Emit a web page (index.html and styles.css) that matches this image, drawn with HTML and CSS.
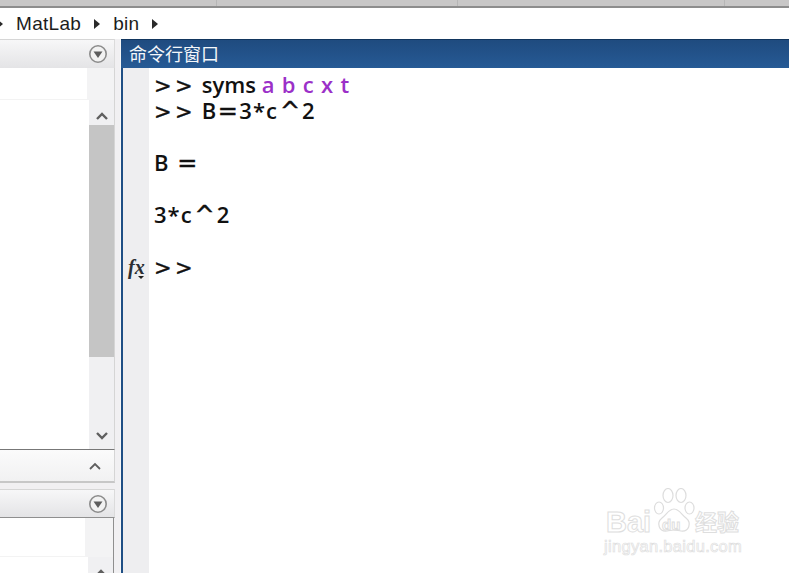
FILE: index.html
```html
<!DOCTYPE html>
<html lang="zh">
<head>
<meta charset="utf-8">
<title>MatLab</title>
<link rel="stylesheet" href="styles.css">
</head>
<body>
<div class="app">
  <div class="topstrip">
    <span class="tick t1"></span><span class="tick t2"></span><span class="tick t3"></span>
  </div>
  <div class="crumbs">
    <svg class="tri tri-first" viewBox="0 0 6 10"><path d="M0 0 6 5 0 10z"/></svg>
    <span>MatLab</span>
    <svg class="tri" viewBox="0 0 6 10"><path d="M0 0 6 5 0 10z"/></svg>
    <span>bin</span>
    <svg class="tri" viewBox="0 0 6 10"><path d="M0 0 6 5 0 10z"/></svg>
  </div>
  <div class="main">
    <aside class="left">
      <div class="panel-head">
        <svg class="menu-btn" viewBox="0 0 20 20"><circle cx="10" cy="10" r="8.2" fill="#f2f2f2" stroke="#8c8c8c" stroke-width="1.6"/><path d="M5.5 7.5h9L10 14z" fill="#5d5d5d"/></svg>
      </div>
      <div class="panel-body">
        <div class="content">
          <div class="content-top"></div>
          <div class="content-main"></div>
        </div>
        <div class="scrollbar">
          <div class="scroll-gap"></div>
          <svg class="arrow" viewBox="0 0 14 10"><path d="M2 8 7 3l5 5" fill="none" stroke="#5f5f5f" stroke-width="2.4"/></svg>
          <div class="thumb"></div>
          <svg class="arrow arrow-down" viewBox="0 0 14 10"><path d="M2 2l5 5 5-5" fill="none" stroke="#5f5f5f" stroke-width="2.4"/></svg>
        </div>
      </div>
      <div class="collapsed">
        <svg class="arrow collapsed-arrow" viewBox="0 0 14 10"><path d="M2 8 7 3l5 5" fill="none" stroke="#5f5f5f" stroke-width="1.8"/></svg>
      </div>
      <div class="panel-head second">
        <svg class="menu-btn" viewBox="0 0 20 20"><circle cx="10" cy="10" r="8.2" fill="#f2f2f2" stroke="#8c8c8c" stroke-width="1.6"/><path d="M5.5 7.5h9L10 14z" fill="#5d5d5d"/></svg>
      </div>
      <div class="panel-body lower">
        <div class="content">
          <div class="content-top short"></div>
          <div class="content-main"></div>
        </div>
        <div class="scrollbar lower-bar">
          <div class="scroll-gap short"></div>
          <svg class="arrow" viewBox="0 0 14 10"><path d="M2 8 7 3l5 5" fill="none" stroke="#5f5f5f" stroke-width="2.4"/></svg>
        </div>
      </div>
    </aside>
    <section class="cmd">
      <header class="cmd-title">命令行窗口</header>
      <div class="cmd-body">
        <div class="gutter"><span class="fx">fx</span><i class="fx-caret"></i></div>
        <pre class="console"><span class="op">&gt;&gt;</span> syms <span class="kw">a b c x t</span>
<span class="op">&gt;&gt;</span> B<span class="eq">=</span><span class="num">3*c</span><span class="hat">^</span>2

B <span class="eq wide">=</span>

<span class="num">3*c</span><span class="hat">^</span>2

<span class="op">&gt;&gt;</span></pre>
      </div>
    </section>
  </div>
  <div class="watermark">
    <svg class="paw" viewBox="0 0 42 46" fill="none" stroke="#dddddd" stroke-width="1.2">
      <ellipse cx="6" cy="20" rx="4.5" ry="6"/>
      <ellipse cx="15" cy="7.5" rx="5" ry="7"/>
      <ellipse cx="28" cy="7.5" rx="5" ry="7"/>
      <ellipse cx="36.5" cy="20" rx="4.5" ry="6"/>
      <path d="M21 21c5 0 7 5 12 9 6 5 3 14-5 13-3-.4-5-1-7-1s-4 .6-7 1c-8 1-11-8-5-13 5-4 7-9 12-9z"/>
    </svg>
    <span class="wm-bai">Bai</span><span class="wm-du">du</span><span class="wm-cn">经验</span>
    <span class="wm-url">jingyan.baidu.com</span>
  </div>
</div>
</body>
</html>
```

FILE: styles.css
```css
* { box-sizing: border-box; }
html, body { margin: 0; padding: 0; }
body { background: #fff; overflow: hidden; }

.app {
  position: relative;
  width: 789px;
  height: 573px;
  display: flex;
  flex-direction: column;
  overflow: hidden;
  font-family: "Open Sans", "Noto Sans CJK SC", sans-serif;
}

.topstrip {
  height: 8px;
  flex: none;
  background: #c8c7c7;
  border-bottom: 2px solid #8d8d8d;
  display: flex;
}
.tick { width: 1px; height: 6px; background: #b6b6b6; }
.t1 { margin-left: 216px; }
.t2 { margin-left: 240px; }
.t3 { margin-left: 266px; }

.crumbs {
  height: 31px;
  flex: none;
  display: flex;
  align-items: center;
  font-family: "Liberation Sans", sans-serif;
  font-size: 19px;
  color: #1c1c1c;
  background: #fff;
}
.crumbs span { margin: 0 13px; letter-spacing: .3px; }
.tri { width: 6px; height: 10px; fill: #2a2a2a; flex: none; }
.tri-first { margin-left: -3px; }

.main { flex: 1; display: flex; min-height: 0; }

.left {
  width: 121px;
  flex: none;
  background: #f1f0f2;
  border-right: 1px solid #f7f7f7;
  display: flex;
  flex-direction: column;
}
.panel-head {
  height: 29px;
  flex: none;
  width: 115px;
  background: linear-gradient(#f7f7f8, #e4e4e6);
  border-top: 1px solid #d6d6d6;
  border-right: 1px solid #dbdbdb;
  display: flex;
  justify-content: flex-end;
  align-items: center;
  padding-right: 6px;
}
.panel-head.second {
  height: 29px;
  margin-top: 6px;
  border-bottom: 1px solid #8f8f8f;
}
.menu-btn { width: 20px; height: 20px; }

.panel-body {
  width: 115px;
  height: 382px;
  flex: none;
  display: flex;
  background: #fff;
  border-right: 1px solid #d5d5d5;
  border-bottom: 1px solid #777;
}
.panel-body.lower {
  flex: 1;
  height: auto;
  width: 114px;
  border-bottom: 0;
  border-right: 1px solid #8f8f8f;
}
.content { flex: 1; display: flex; flex-direction: column; }
.content-top { height: 32px; background: #fff; border-bottom: 1px solid #f3f3f3; }
.content-top.short { height: 39px; }
.content-main { flex: 1; background: #fff; }

.scrollbar {
  width: 25px;
  flex: none;
  background: #f0f0f2;
  display: flex;
  flex-direction: column;
  align-items: center;
}
.scroll-gap {
  height: 32px;
  width: calc(100% + 2px);
  flex: none;
  align-self: flex-end;
  background: #f3f3f4;
}
.scroll-gap.short { height: 39px; width: calc(100% + 3px); }
.arrow { width: 14px; height: 10px; flex: none; margin-top: 11px; }
.thumb {
  width: 100%;
  height: 232px;
  flex: none;
  margin-top: 4px;
  background: #c5c5c5;
}
.arrow-down { margin-top: 74px; }

.collapsed {
  width: 115px;
  height: 33px;
  flex: none;
  display: flex;
  justify-content: flex-end;
  align-items: center;
  padding-right: 12px;
  background: linear-gradient(#fbfbfb, #f1f1f2);
  border-right: 1px solid #d5d5d5;
  border-bottom: 2px solid #c7c7c7;
}
.collapsed-arrow { margin-top: 0; }

.cmd {
  flex: 1;
  min-width: 0;
  display: flex;
  flex-direction: column;
  border-left: 2px solid #1f4f85;
}
.cmd-title {
  height: 29px;
  flex: none;
  margin-left: -2px;
  padding: 0 0 0 8px;
  background: linear-gradient(#1f4b7f, #265a95);
  border-top: 1px solid #12365e;
  color: #f4f7fa;
  font-size: 18px;
  line-height: 27px;
  font-family: "Noto Sans CJK SC", sans-serif;
  font-weight: 400;
}
.cmd-body { flex: 1; display: flex; min-height: 0; }
.gutter {
  position: relative;
  width: 26px;
  flex: none;
  background: #eeeef0;
}
.fx {
  position: absolute;
  left: 5px;
  top: 187px;
  font: italic 700 20px/24px "Liberation Serif", serif;
  color: #2b2e33;
}
.fx-caret {
  position: absolute;
  left: 15px;
  top: 208px;
  border: 3px solid transparent;
  border-top-color: #222;
  border-bottom: 0;
}
.console {
  margin: 0;
  padding: 3px 0 0 5px;
  font-family: "Open Sans", sans-serif;
  font-weight: 600;
  font-size: 22px;
  line-height: 26px;
  color: #111;
  white-space: pre;
}
.op, .eq, .hat {
  font-family: "DejaVu Sans", sans-serif;
  font-weight: 400;
  line-height: 0;
  -webkit-text-stroke: .4px #111;
}
.op { font-size: 21px; letter-spacing: 3.4px; }
.eq { font-size: 24px; margin: 0 1.5px; }
.eq.wide { margin: 0 0 0 3px; }
.hat { font-size: 24px; margin: 0 2px; }
.num { letter-spacing: 1px; }
.kw { color: #9b30c8; letter-spacing: .8px; }

.watermark {
  position: absolute;
  left: 604px;
  top: 488px;
  width: 160px;
  height: 85px;
  color: transparent;
  -webkit-text-stroke: 1px #dedede;
  font-family: "Liberation Sans", sans-serif;
}
.paw { position: absolute; left: 49px; top: 0; width: 42px; height: 46px; }
.wm-bai { position: absolute; left: 2px; top: 15px; font: 700 29px/38px "Liberation Sans", sans-serif; }
.wm-du { position: absolute; left: 58px; top: 27px; font: 700 15px/20px "Liberation Sans", sans-serif; }
.wm-cn { position: absolute; left: 91px; top: 17px; font: 700 22px/30px "Noto Sans CJK SC", sans-serif; }
.wm-url { position: absolute; left: 0; top: 48px; font: 400 16.5px/20px "Liberation Sans", sans-serif; letter-spacing: .3px; -webkit-text-stroke: .7px #dedede; }
```
